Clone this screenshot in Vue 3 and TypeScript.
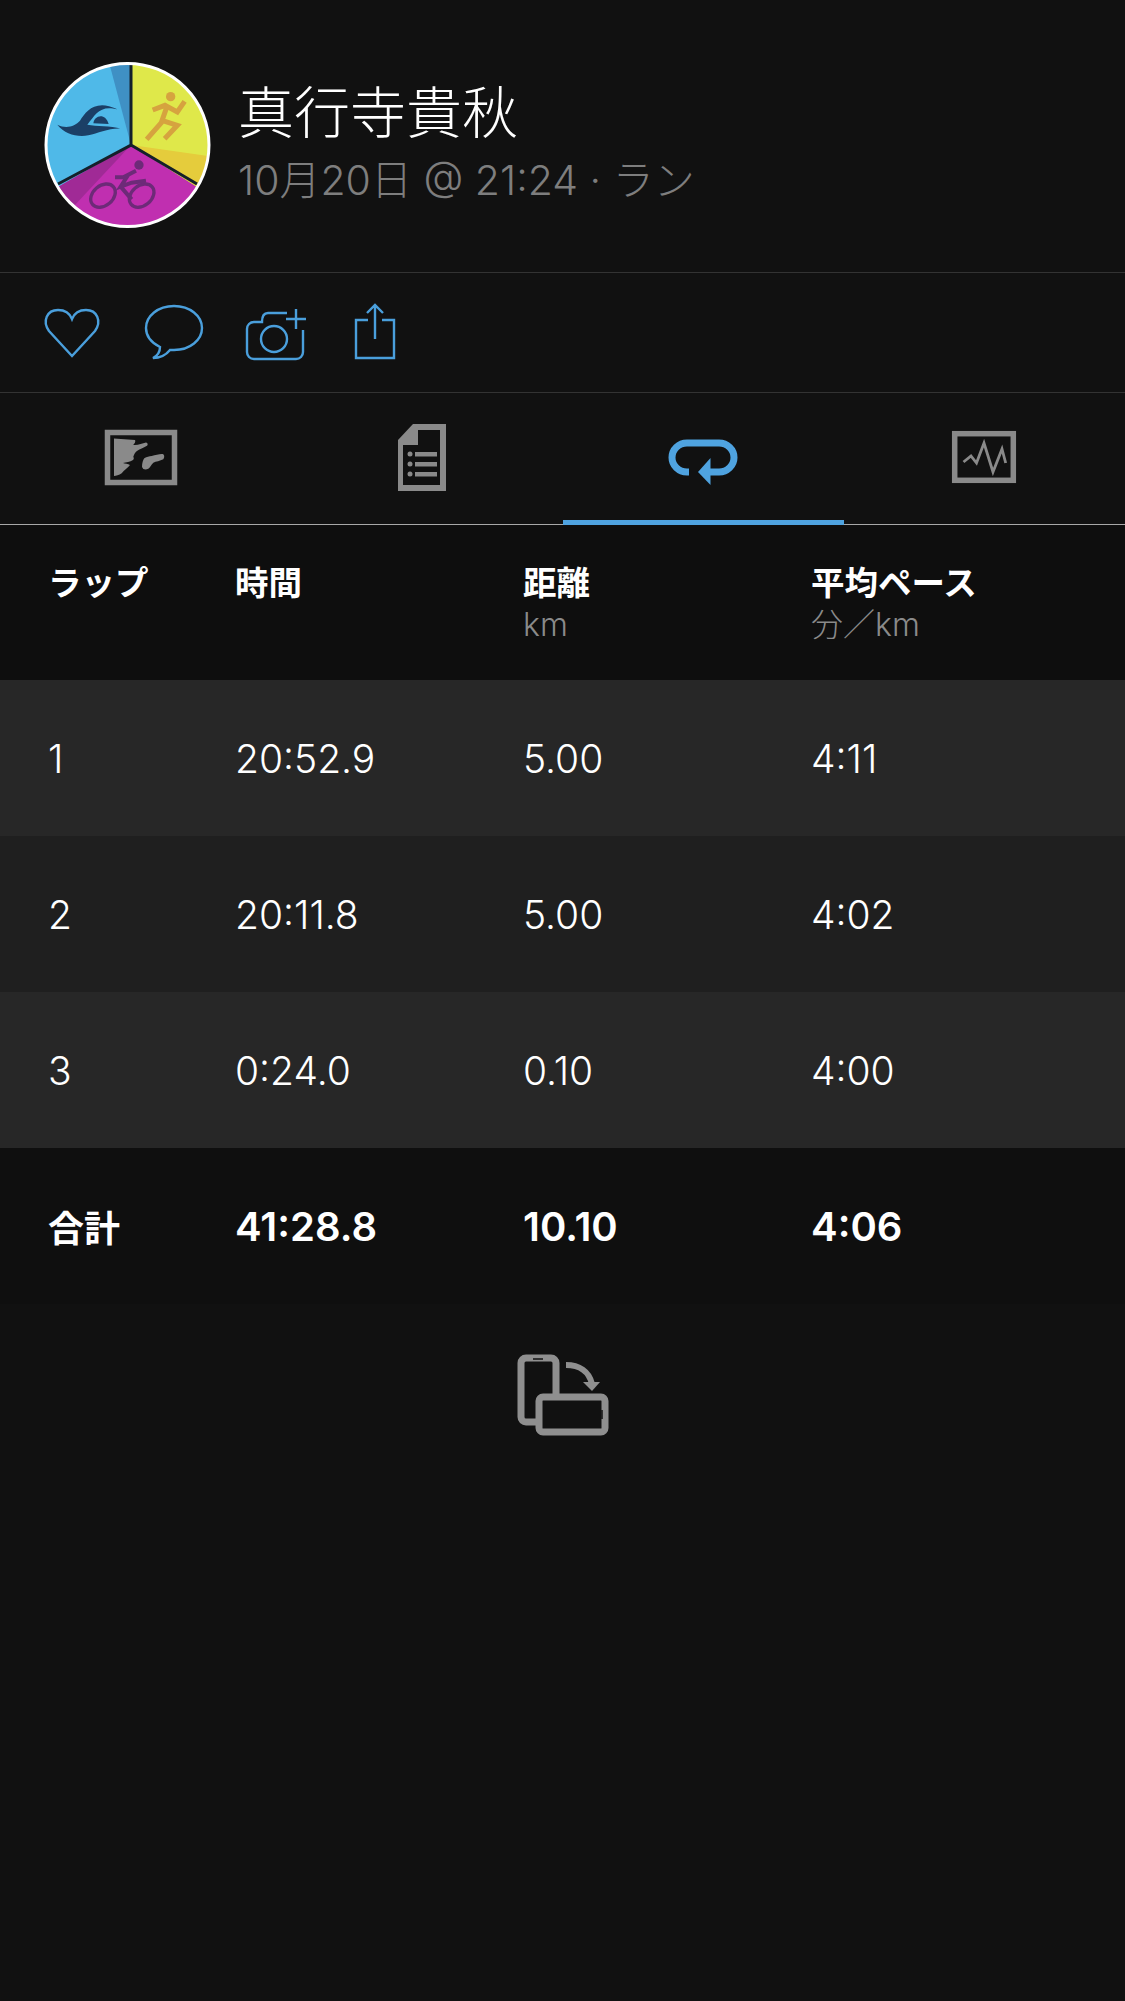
<script setup lang="ts">
const rows = [
  { lap: '1', time: '20:52.9', dist: '5.00', pace: '4:11' },
  { lap: '2', time: '20:11.8', dist: '5.00', pace: '4:02' },
  { lap: '3', time: '0:24.0', dist: '0.10', pace: '4:00' },
]
</script>

<template>
  <div class="page">
    <div class="head">
      <svg class="avatar" viewBox="44 62 168 168">
        <circle cx="127.5" cy="145" r="82" fill="#4fb9e8" />
        <path d="M131 145 L131 63 A82 82 0 0 1 197 187 Z" fill="#dfe84a" />
        <path d="M131 145 L197 187 A82 82 0 0 1 58 187 Z" fill="#c02fb0" />
        <path d="M110 66 L131 63 L131 145 Z" fill="#3f90c4" />
        <path d="M131 145 L208 156 A82 82 0 0 1 197 187 Z" fill="#e5cc3c" />
        <path d="M131 145 L58 187 A82 82 0 0 0 74 206 Z" fill="#a02a96" />
        <path d="M131 63 V145 L58 184 M131 145 L197 184" fill="none" stroke="#14202a" stroke-width="3" />
        <g transform="translate(30 50) scale(.3333)">
          <path d="M82 224 C110 238 135 228 150 212 C168 185 195 146 262 178 C232 170 214 176 200 190 C190 200 182 212 172 224 C200 230 240 226 274 236 C235 234 205 250 175 256 C140 262 105 252 82 224Z" fill="#1b3f66" />
          <path d="M190 220 C192 196 226 186 236 222Z" fill="#1b3f66" />
          <circle cx="422" cy="140" r="14" fill="#d6a33f" />
          <path d="M368 180 L405 166 L442 186 L464 154 M410 172 L394 218 L350 268 M398 212 L442 226 L404 266" fill="none" stroke="#d6a33f" stroke-width="15" />
          <circle cx="327" cy="345" r="14" fill="#6d2a78" />
          <ellipse cx="219" cy="437" rx="41" ry="30" transform="rotate(-40 219 437)" fill="none" stroke="#6d2a78" stroke-width="10" />
          <ellipse cx="335" cy="437" rx="41" ry="30" transform="rotate(-40 335 437)" fill="none" stroke="#6d2a78" stroke-width="10" />
          <path d="M255 382 H290 L272 410 L305 398 L348 392 M318 362 L280 382 M272 410 L305 448" fill="none" stroke="#6d2a78" stroke-width="12" />
        </g>
        <circle cx="127.5" cy="145" r="81.5" fill="none" stroke="#fff" stroke-width="3" />
      </svg>
      <div class="who">
        <div class="name">真行寺貴秋</div>
        <div class="sub">10月20日 @ 21:24 · ラン</div>
      </div>
    </div>

    <div class="actions">
      <svg class="act" viewBox="0 0 80 80">
        <path d="M40 63 L17 38 C10 28 15 17 26 17 C33 17 38 21 40 26 C42 21 47 17 54 17 C65 17 70 28 63 38 Z" />
      </svg>
      <svg class="act" viewBox="0 0 80 80">
        <path d="M41 13 C25 13 13 23 13 35 C13 44 19 50 27 54 C27 59 24 63 20 65 C28 65 33 62 37 57 C38 57 40 57 41 57 C57 57 69 47 69 35 C69 23 57 13 41 13Z" />
      </svg>
      <svg class="act" viewBox="0 0 80 80">
        <path d="M53 20 H34 C30 20 28 23 28 29 H20 C16 29 13 32 13 36 V59 C13 63 16 66 20 66 H62 C66 66 69 63 69 59 V37" />
        <circle cx="40" cy="46" r="13" />
        <path d="M52 26 H72 M62 16 V36" />
      </svg>
      <svg class="act" viewBox="0 0 80 80">
        <path d="M33 27 H21 V65 H59 V27 H47 M40 12 V46 M32 20 L40 12 L48 20" />
      </svg>
    </div>

    <div class="tabs">
      <div class="tab">
        <svg class="tab-icon" viewBox="0 0 80 80">
          <rect x="6.5" y="15.5" width="67" height="50" fill="none" stroke="#8a8a8a" stroke-width="5.5" />
          <path d="M13 21.5 L34 23 C35 25 33 27 32.3 28 C37 28.5 41 26.5 45 25.5 C47 26 47 28 46 28.7 C42 31 39 32 36.3 33.7 C34 35 33 38 32.3 39.7 C33 41 33 42 32 43 C29 45 25 45 22 46 C24 46.5 27 47 29 48 C27 51 23 53 20.7 56.3 C18 58 15 59 13 59 Z" fill="#8a8a8a" />
          <path d="M41 50 C41 46 42 43 43.3 41.3 C46 39.5 48 39.5 50.7 39 C55 38 60 36.5 62.3 37.3 C64 39 63 41 62.3 42.3 C59 44 55 44.5 52.3 45.7 C50 48 49 50.5 47.3 51.8 C45 53 43.5 52.5 42.3 52Z" fill="#8a8a8a" />
        </svg>
      </div>
      <div class="tab">
        <svg class="tab-icon" viewBox="0 0 80 80">
          <path d="M31 7 H64 V74 H16 V23 Z M36 13 V28 H21 V68 H58 V13 Z" fill="#8a8a8a" fill-rule="evenodd" />
          <circle cx="28" cy="37" r="2.5" fill="#8a8a8a" />
          <circle cx="28" cy="47" r="2.5" fill="#8a8a8a" />
          <circle cx="28" cy="57" r="2.5" fill="#8a8a8a" />
          <path d="M33 35 H55 V39.5 H33 Z M33 45 H55 V49.5 H33 Z M33 55 H55 V59.5 H33 Z" fill="#8a8a8a" />
        </svg>
      </div>
      <div class="tab active">
        <svg class="tab-icon" viewBox="0 0 80 80">
          <path d="M26 55 H24 A15 14.5 0 0 1 24 26 H56 A15 14.5 0 0 1 56 55 H44" fill="none" stroke="#4fa3e0" stroke-width="7" />
          <path d="M35 55 L47.5 41 V68 Z" fill="#4fa3e0" />
        </svg>
      </div>
      <div class="tab">
        <svg class="tab-icon" viewBox="0 0 80 80">
          <rect x="10.7" y="16.7" width="58.6" height="46.6" fill="none" stroke="#8a8a8a" stroke-width="5.5" />
          <path d="M19.5 45 L27 39 L32.5 46 L40 26 L49 55 L58 32 L61.7 46" fill="none" stroke="#8a8a8a" stroke-width="2.8" />
        </svg>
      </div>
    </div>

    <div class="laps">
      <div class="row header">
        <div class="cell"><div class="title">ラップ</div></div>
        <div class="cell"><div class="title">時間</div></div>
        <div class="cell">
          <div class="title">距離</div>
          <div class="unit">km</div>
        </div>
        <div class="cell">
          <div class="title">平均ペース</div>
          <div class="unit">分／km</div>
        </div>
      </div>
      <div v-for="row in rows" :key="row.lap" class="row data">
        <div class="cell">{{ row.lap }}</div>
        <div class="cell">{{ row.time }}</div>
        <div class="cell">{{ row.dist }}</div>
        <div class="cell">{{ row.pace }}</div>
      </div>
      <div class="row data total">
        <div class="cell cjk">合計</div>
        <div class="cell">41:28.8</div>
        <div class="cell">10.10</div>
        <div class="cell">4:06</div>
      </div>
    </div>

    <div class="rotate">
      <svg width="92" height="82" viewBox="0 0 92 82">
        <rect x="4" y="4" width="35" height="64" rx="5" fill="none" stroke="#8f8f8f" stroke-width="7" />
        <path d="M16 5 H26" stroke="#111" stroke-width="1.5" />
        <rect x="22" y="43" width="66" height="35" rx="4" fill="#111" stroke="#8f8f8f" stroke-width="7" />
        <path d="M85 56 V65" stroke="#111" stroke-width="1.5" />
        <path d="M49 11 C62 11 72 17 75 30" fill="none" stroke="#8f8f8f" stroke-width="6" />
        <path d="M66 28 H83 L75 37 Z" fill="#8f8f8f" />
      </svg>
    </div>
  </div>
</template>

<style>
html,
body {
  background: #111;
}
</style>

<style scoped>
.page {
  min-height: 2001px;
  background: #111;
  color: #fff;
  font-family: Inter, "Noto Sans CJK JP", sans-serif;
}

.head {
  height: 272px;
  display: flex;
  align-items: center;
  gap: 26px;
  padding-left: 44px;
  box-sizing: border-box;
  padding-top: 20px;
}

.avatar {
  width: 168px;
  height: 168px;
}

.who {
  display: flex;
  flex-direction: column;
  gap: 14px;
  margin-bottom: 12px;
}

.name {
  font-size: 56px;
  line-height: 66px;
  font-weight: 300;
  font-family: "Noto Sans CJK JP", sans-serif;
}

.sub {
  font-size: 41px;
  line-height: 48px;
  color: #7e7e7e;
  font-weight: 300;
}

.actions {
  height: 119px;
  display: flex;
  align-items: center;
  gap: 21px;
  padding-left: 32px;
  border-top: 1px solid #333;
  border-bottom: 1px solid #333;
}

.act {
  width: 80px;
  height: 80px;
  fill: none;
  stroke: #4a9fdc;
  stroke-width: 2.4;
}

.tabs {
  height: 132px;
  display: grid;
  grid-template-columns: repeat(4, 1fr);
  border-bottom: 1px solid #a8a8a8;
  box-sizing: border-box;
}

.tab {
  position: relative;
  display: flex;
  align-items: center;
  justify-content: center;
  padding-bottom: 4px;
}

.tab.active::after {
  content: "";
  position: absolute;
  left: 0;
  right: 0;
  bottom: -1px;
  height: 5px;
  background: #4fa3e0;
}

.tab-icon {
  width: 80px;
  height: 80px;
}

.row {
  display: grid;
  grid-template-columns: 187px 288px 288px 1fr;
  padding-left: 48px;
  height: 156px;
  box-sizing: border-box;
}

.header {
  height: 155px;
  background: #0e0e0e;
  padding-top: 36px;
}

.title {
  font-size: 33.5px;
  line-height: 44px;
  font-weight: 700;
}

.unit {
  font-size: 32px;
  line-height: 40px;
  color: #8a8a8a;
  font-weight: 300;
}

.data {
  align-items: center;
  font-size: 39px;
  font-weight: 300;
}

.data:nth-child(even) {
  background: #272727;
}

.data:nth-child(odd) {
  background: #1f1f1f;
}

.data.total {
  background: #0f0f0f;
  font-size: 40px;
  font-weight: 600;
}

.cjk {
  font-size: 36px;
}

.rotate {
  display: flex;
  justify-content: center;
  padding-top: 50px;
}
</style>
